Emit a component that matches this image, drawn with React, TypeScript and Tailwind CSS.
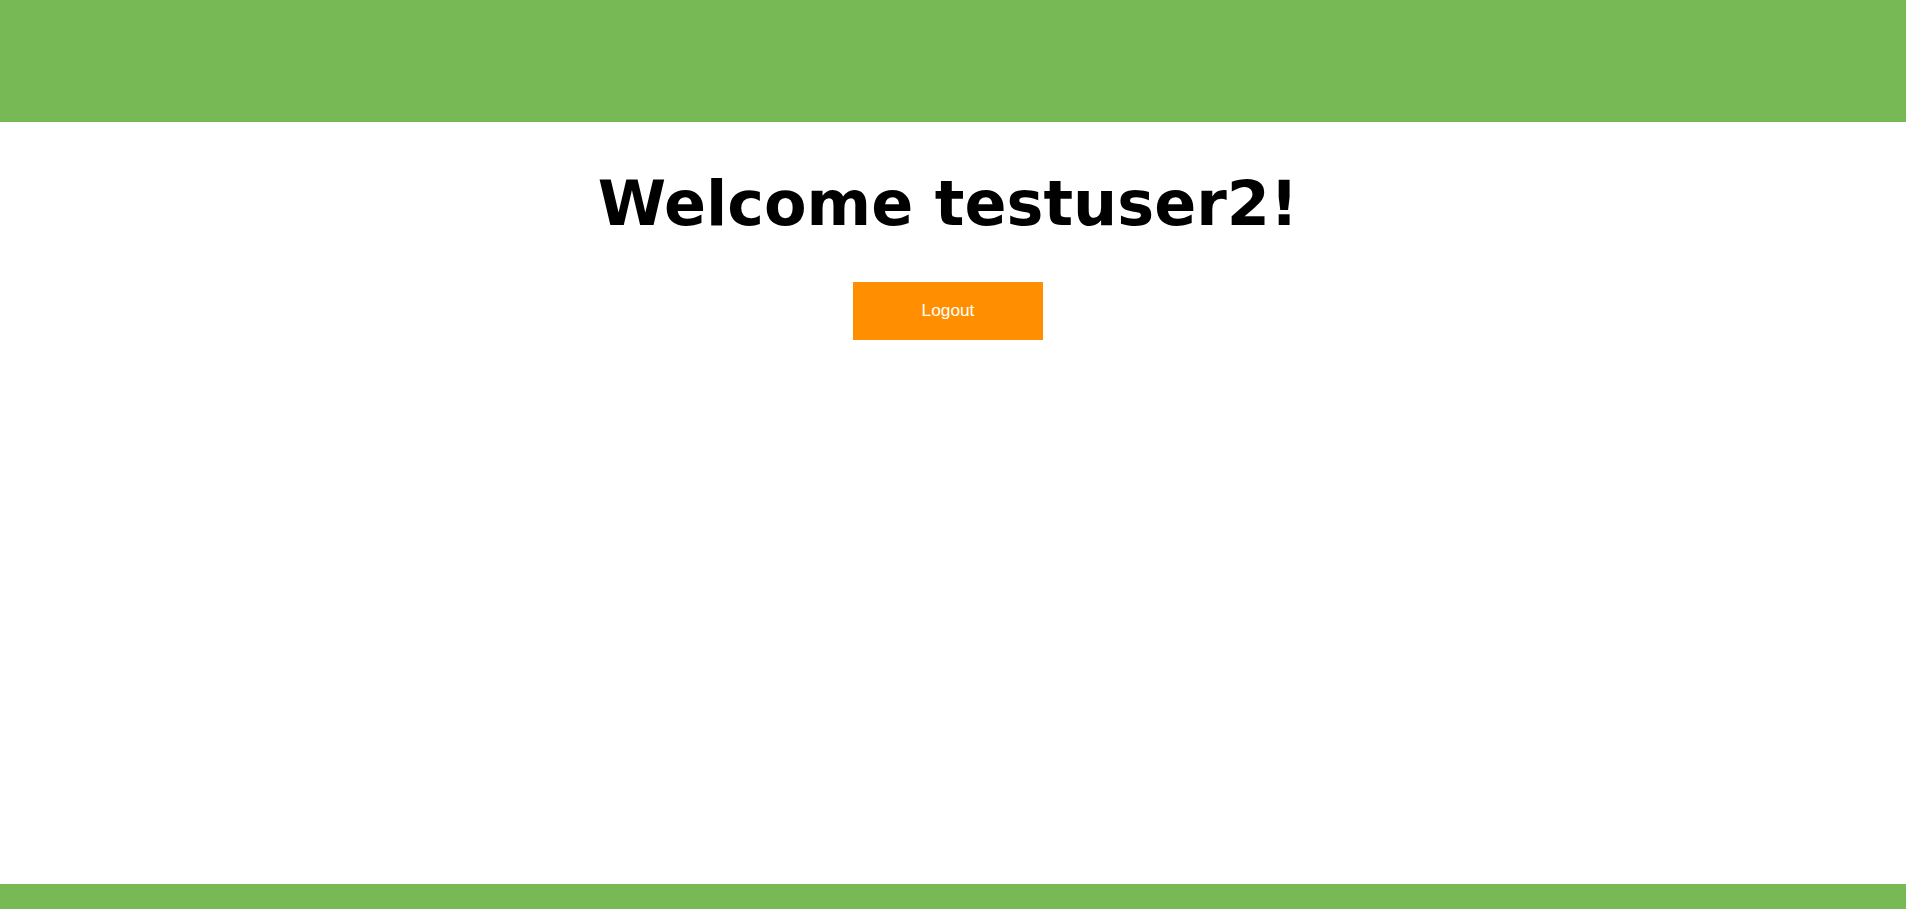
import React from 'react';

export default function App() {
  return (
    <div className="flex h-screen flex-col bg-white">
      <header className="h-[122px] w-full shrink-0 bg-[#77b955]" />
      <main className="flex flex-1 flex-col items-center pr-[10px]">
        <h1 className="mt-[46px] font-['DejaVu_Sans',sans-serif] text-[62px] leading-[72px] font-bold text-black">
          Welcome testuser2!
        </h1>
        <button
          onClick={() => {}}
          className="mt-[42px] flex h-[58px] w-[190px] items-center justify-center bg-[#ff8f00] font-['Liberation_Sans',Arial,sans-serif] text-[17.3px] text-white"
        >
          Logout
        </button>
      </main>
      <footer className="h-[25px] w-full shrink-0 bg-[#77b955]" />
    </div>
  );
}
